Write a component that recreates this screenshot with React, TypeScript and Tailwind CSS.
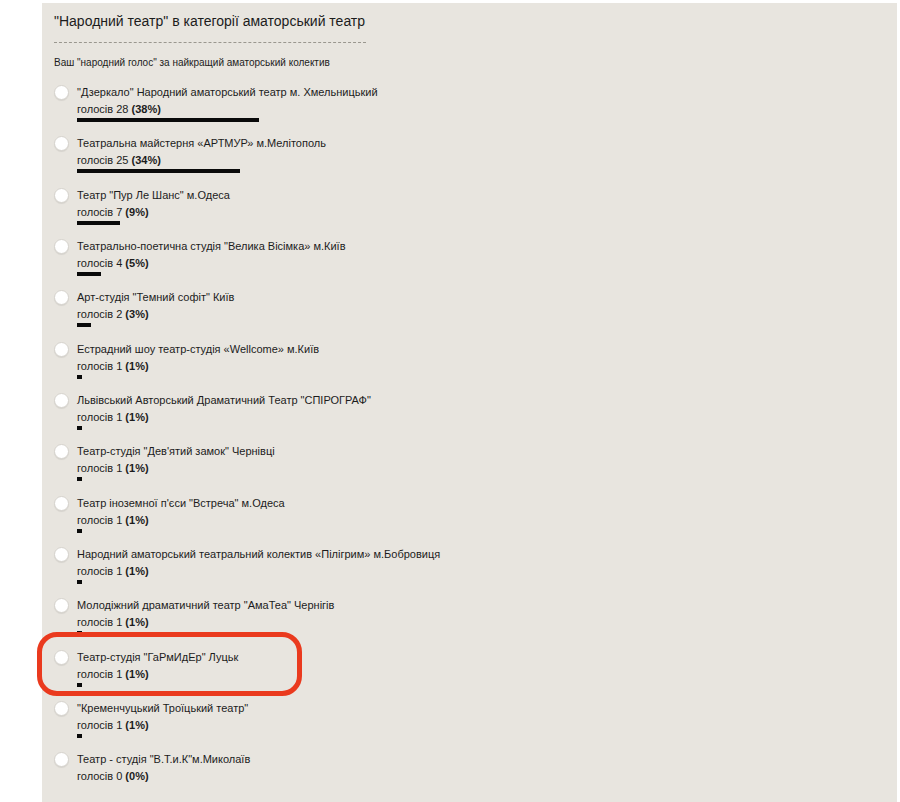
const items = [
  { name: '"Дзеркало" Народний аматорський театр м. Хмельницький', votes: 28, pct: 38 },
  { name: 'Театральна майстерня «АРТМУР» м.Мелітополь', votes: 25, pct: 34 },
  { name: 'Театр "Пур Ле Шанс" м.Одеса', votes: 7, pct: 9 },
  { name: 'Театрально-поетична студія "Велика Вісімка» м.Київ', votes: 4, pct: 5 },
  { name: 'Арт-студія "Темний софіт" Київ', votes: 2, pct: 3 },
  { name: 'Естрадний шоу театр-студія «Wellcome» м.Київ', votes: 1, pct: 1 },
  { name: 'Львівський Авторський Драматичний Театр "СПІРОГРАФ"', votes: 1, pct: 1 },
  { name: 'Театр-студія "Дев\'ятий замок" Чернівці', votes: 1, pct: 1 },
  { name: 'Театр іноземної п\'єси "Встреча" м.Одеса', votes: 1, pct: 1 },
  { name: 'Народний аматорський театральний колектив «Пілігрим» м.Бобровиця', votes: 1, pct: 1 },
  { name: 'Молодіжний драматичний театр "АмаТеа" Чернігів', votes: 1, pct: 1 },
  { name: 'Театр-студія "ГаРмИдЕр" Луцьк', votes: 1, pct: 1 },
  { name: '"Кременчуцький Троїцький театр"', votes: 1, pct: 1 },
  { name: 'Театр - студія "В.Т.и.К"м.Миколаїв', votes: 0, pct: 0 },
]

export default function App() {
  return (
    <div className="h-[802px] w-[900px] overflow-hidden bg-white pt-[3px] font-['Liberation_Sans',Arial,sans-serif] text-[#1c1c1c]">
      <div className="relative ml-[42px] h-[799px] w-[855px] bg-[#e8e5df] pl-[12px] pt-[8px]">
        <h2 className="text-[14px] leading-[20px]">"Народний театр" в категорії аматорський театр</h2>
        <div className="mt-[11px] w-[312px] border-t border-dashed border-[#9a978f]" />
        <p className="mt-[13px] text-[10px] leading-[14px]">Ваш "народний голос" за найкращий аматорський колектив</p>

        <ul className="mt-[14px]">
          {items.map((it) => (
            <li key={it.name} className="flex h-[51.35px] items-start gap-[8px]">
              <span className="mt-[1px] h-[15px] w-[15px] shrink-0 rounded-full border border-[#d6d3cd] bg-white shadow-[0_1px_1px_rgba(0,0,0,0.08)]" />
              <div className="flex flex-col">
                <span className="text-[11px] leading-[16px]">{it.name}</span>
                <span className="mt-px text-[11px] leading-[16px]">
                  голосів {it.votes} <b>({it.pct}%)</b>
                </span>
                {it.pct > 0 && (
                  <span
                    className="mt-[1px] h-[4px] bg-[#0a0a0a]"
                    style={{ width: Math.max(3, Math.round(it.pct * 4.78)) }}
                  />
                )}
              </div>
            </li>
          ))}
        </ul>

        <div className="pointer-events-none absolute left-[-5px] top-[629px] h-[64px] w-[265px] rounded-[20px] border-[5px] border-[#ea3a1e]" />
      </div>
    </div>
  )
}
